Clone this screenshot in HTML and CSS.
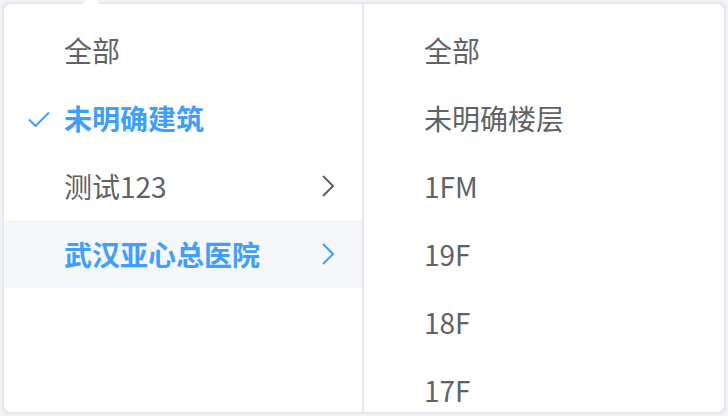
FILE: index.html
```html
<!DOCTYPE html>
<html lang="zh-CN">
<head>
<meta charset="utf-8">
<link rel="stylesheet" href="styles.css">
</head>
<body>
<div class="panel">
  <span class="popper-arrow"></span>
  <ul class="menu menu-left">
    <li class="node"><span class="slot"></span><span class="label">全部</span></li>
    <li class="node active"><span class="slot"><svg class="check" width="22" height="16" viewBox="0 0 22 16"><path d="M1 8.5 L7.5 15 L21 1.5" fill="none" stroke="#409eff" stroke-width="2"/></svg></span><span class="label">未明确建筑</span></li>
    <li class="node"><span class="slot"></span><span class="label">测试123</span><svg class="arrow" width="12" height="22" viewBox="0 0 12 22"><path d="M1 1 L11 11 L1 21" fill="none" stroke="#606266" stroke-width="2"/></svg></li>
    <li class="node active hover"><span class="slot"></span><span class="label">武汉亚心总医院</span><svg class="arrow" width="12" height="22" viewBox="0 0 12 22"><path d="M1 1 L11 11 L1 21" fill="none" stroke="#409eff" stroke-width="2"/></svg></li>
  </ul>
  <ul class="menu menu-right">
    <li class="node"><span class="slot"></span><span class="label">全部</span></li>
    <li class="node"><span class="slot"></span><span class="label">未明确楼层</span></li>
    <li class="node"><span class="slot"></span><span class="label">1FM</span></li>
    <li class="node"><span class="slot"></span><span class="label">19F</span></li>
    <li class="node"><span class="slot"></span><span class="label">18F</span></li>
    <li class="node"><span class="slot"></span><span class="label">17F</span></li>
  </ul>
</div>
</body>
</html>
```

FILE: styles.css
```css
html, body {
  margin: 0;
  padding: 0;
  background: #f2f2f5;
  width: 728px;
  height: 416px;
  overflow: hidden;
}
body {
  padding: 2px 0 0 2px;
  box-sizing: border-box;
  font-family: "Noto Sans CJK SC", "Noto Sans", sans-serif;
}
.panel {
  position: relative;
  width: 724px;
  height: 412px;
  box-sizing: border-box;
  border: 2px solid #e4e7ed;
  border-radius: 8px;
  background: #fff;
  display: flex;
  overflow: visible;
}
.popper-arrow {
  position: absolute;
  left: 78px;
  top: -8px;
  width: 0;
  height: 0;
  border-left: 9px solid transparent;
  border-right: 9px solid transparent;
  border-bottom: 8px solid #fff;
}
.menu {
  list-style: none;
  margin: 0;
  padding: 12px 0 0;
  overflow: hidden;
}
.menu-left {
  width: 358px;
  border-right: 2px solid #e4e7ed;
  border-radius: 6px 0 0 6px;
}
.menu-right {
  flex: 1;
  border-radius: 0 6px 6px 0;
}
.node {
  height: 68px;
  display: flex;
  align-items: center;
  padding: 0 28px 0 20px;
  font-size: 28px;
  color: #606266;
  white-space: nowrap;
}
.slot {
  width: 40px;
  flex: none;
  display: flex;
  align-items: center;
  padding-left: 4px;
  box-sizing: border-box;
}
.check {
  display: block;
  margin-top: 1px;
}
.label {
  flex: 1;
  line-height: 68px;
}
.arrow {
  flex: none;
  display: block;
}
.active {
  color: #409eff;
  font-weight: 700;
}
.hover {
  background: #f5f7fa;
}
```
